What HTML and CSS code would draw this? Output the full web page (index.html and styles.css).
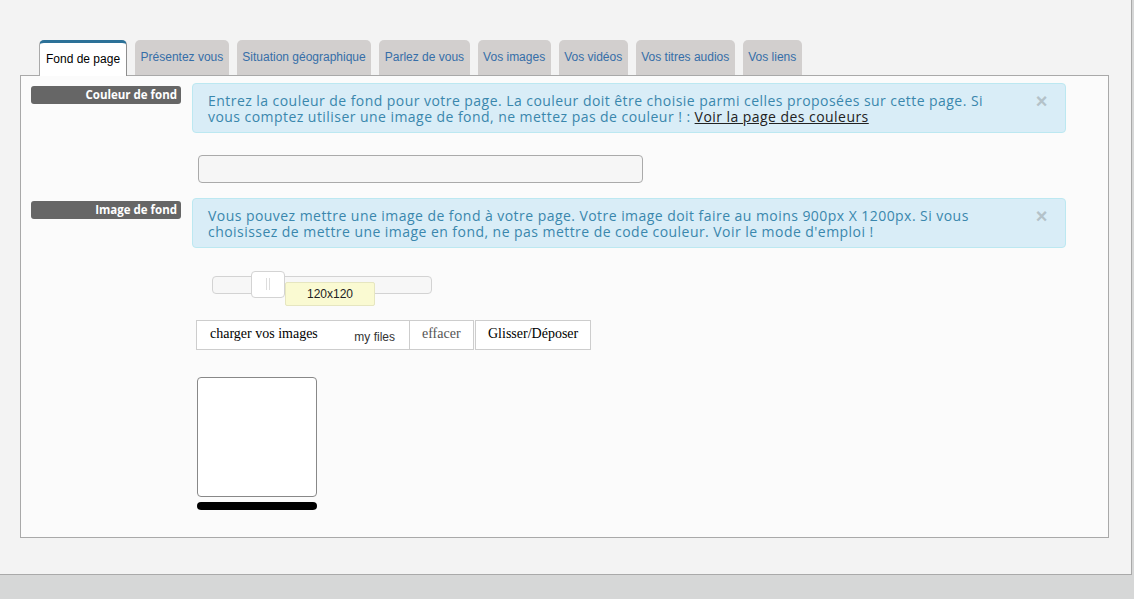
FILE: index.html
```html
<!DOCTYPE html>
<html lang="fr">
<head>
  <meta charset="UTF-8">
  <title>Fond de page</title>
  <link rel="stylesheet" href="styles.css">
</head>
<body>

  <div class="page">

    <div class="tabs">
      <div class="tab active">Fond de page</div>
      <div class="tab">Présentez vous</div>
      <div class="tab">Situation géographique</div>
      <div class="tab">Parlez de vous</div>
      <div class="tab">Vos images</div>
      <div class="tab">Vos vidéos</div>
      <div class="tab">Vos titres audios</div>
      <div class="tab">Vos liens</div>
    </div>

    <div class="panel">

      <div class="row">
        <div class="label">Couleur de fond</div>
        <div class="col">
          <div class="alert">
            <div class="alert-text">Entrez la couleur de fond pour votre page. La couleur doit être choisie parmi celles proposées sur cette page. Si vous comptez utiliser une image de fond, ne mettez pas de couleur ! : <a href="#">Voir la page des couleurs</a></div>
            <span class="close">&times;</span>
          </div>
          <input type="text" class="color-input">
        </div>
      </div>

      <div class="row row-image">
        <div class="label">Image de fond</div>
        <div class="col">
          <div class="alert">
            <div class="alert-text">Vous pouvez mettre une image de fond à votre page. Votre image doit faire au moins 900px X 1200px. Si vous choisissez de mettre une image en fond, ne pas mettre de code couleur. Voir le mode d'emploi !</div>
            <span class="close">&times;</span>
          </div>

          <div class="slider">
            <div class="track">
              <div class="handle"><span class="grip"></span></div>
              <div class="size-tip">120x120</div>
            </div>
          </div>

          <div class="uploader">
            <div class="up-btn up-load">charger vos images <span class="my-files">my files</span></div>
            <div class="up-btn up-clear">effacer</div>
            <div class="up-btn up-drop">Glisser/Déposer</div>
          </div>

          <div class="preview"></div>
          <div class="preview-bar"></div>
        </div>
      </div>

    </div>
  </div>

</body>
</html>
```

FILE: styles.css
```css
body {
  margin: 0;
  background-color: #d6d7d7;
  font-family: "Liberation Sans", Arial, sans-serif;
}
.page {
  box-sizing: border-box;
  width: 1132px;
  height: 575px;
  padding: 40px 0 0 20px;
  background-color: #f3f3f3;
  border-right: 1px solid #a9a9a9;
  border-bottom: 1px solid #a9a9a9;
}
.tabs {
  display: flex;
  gap: 8px;
  margin-left: 19px;
  height: 35px;
}
.tab {
  box-sizing: border-box;
  height: 35px;
  padding: 0 5.5px;
  line-height: 35px;
  font-size: 12px;
  color: #356ea8;
  background-color: #d2cfce;
  border-radius: 5px 5px 0 0;
}
.tab.active {
  position: relative;
  z-index: 1;
  height: 36px;
  line-height: 33px;
  color: #000;
  background-color: #fff;
  border-top: 3px solid #2c7198;
  border-left: 1px solid #a9a9a9;
  border-right: 1px solid #8e8e8e;
  padding: 0 6px;
}
.panel {
  box-sizing: border-box;
  width: 1089px;
  height: 463px;
  padding: 7px 10px;
  background-color: #fbfbfb;
  border: 1px solid #a9a9a9;
}
.row {
  display: flex;
  gap: 11px;
}
.row-image {
  margin-top: 15px;
}
.label {
  box-sizing: border-box;
  width: 150px;
  height: 18px;
  margin-top: 3px;
  padding-right: 4px;
  text-align: right;
  font-family: "Open Sans", sans-serif;
  font-size: 11.5px;
  font-weight: bold;
  line-height: 18px;
  color: #fff;
  background-color: #666;
  border-radius: 3px;
}
.col {
  width: 874px;
}
.alert {
  box-sizing: border-box;
  display: flex;
  align-items: flex-start;
  height: 50px;
  padding: 9px 17px 0 15px;
  background-color: #d9edf7;
  border: 1px solid #bce8f1;
  border-radius: 4px;
  color: #3a87ad;
  font-family: "Open Sans", sans-serif;
  font-size: 14px;
  letter-spacing: 0.45px;
  line-height: 16px;
}
.alert-text {
  flex: 1;
}
.alert a {
  color: #222;
}
.close {
  margin-left: 20px;
  font-family: "Liberation Sans", Arial, sans-serif;
  font-size: 20px;
  font-weight: bold;
  line-height: 16px;
  color: #b4c2c9;
}
.color-input {
  box-sizing: border-box;
  display: block;
  width: 445px;
  height: 28px;
  margin: 22px 0 0 6px;
  background-color: #f6f6f6;
  border: 1px solid #aaa;
  border-radius: 4px;
}
.slider {
  box-sizing: border-box;
  height: 35px;
  margin: 24px 0 0 20px;
  padding-top: 4px;
}
.track {
  position: relative;
  box-sizing: border-box;
  width: 220px;
  height: 18px;
  background-color: #f7f7f7;
  border: 1px solid #d3d3d3;
  border-radius: 4px;
}
.handle {
  position: absolute;
  left: 38px;
  top: -6px;
  box-sizing: border-box;
  width: 34px;
  height: 27px;
  background-color: #fff;
  border: 1px solid #d3d3d3;
  border-radius: 4px;
}
.grip {
  position: absolute;
  left: 14px;
  top: 6px;
  width: 2px;
  height: 12px;
  border-left: 1px solid #ddd;
  border-right: 1px solid #ddd;
}
.size-tip {
  position: absolute;
  left: 72px;
  top: 5px;
  box-sizing: border-box;
  width: 90px;
  height: 24px;
  line-height: 22px;
  text-align: center;
  font-size: 12px;
  color: #222;
  background-color: #fafad2;
  border: 1px solid #e6e6c0;
  border-radius: 2px;
}
.uploader {
  display: flex;
  margin: 13px 0 0 4px;
  font-family: "Liberation Serif", "Times New Roman", serif;
  font-size: 14px;
}
.up-btn {
  box-sizing: border-box;
  height: 30px;
  line-height: 26px;
  background-color: #fff;
  border: 1px solid #cdcdcd;
}
.up-load {
  width: 214px;
  padding-left: 13px;
}
.my-files {
  margin-left: 33px;
  font-family: "Liberation Sans", Arial, sans-serif;
  font-size: 12px;
  line-height: 32px;
  vertical-align: top;
  color: #333;
}
.up-clear {
  width: 64px;
  padding-left: 12px;
  border-left: none;
  color: #555;
}
.up-drop {
  width: 116px;
  padding-left: 12px;
  margin-left: 1px;
  color: #000;
}
.preview {
  box-sizing: border-box;
  width: 120px;
  height: 120px;
  margin: 27px 0 0 5px;
  background-color: #fff;
  border: 1px solid #888;
  border-radius: 4px;
}
.preview-bar {
  width: 120px;
  height: 8px;
  margin: 5px 0 0 5px;
  background-color: #000;
  border-radius: 4px;
}
```
